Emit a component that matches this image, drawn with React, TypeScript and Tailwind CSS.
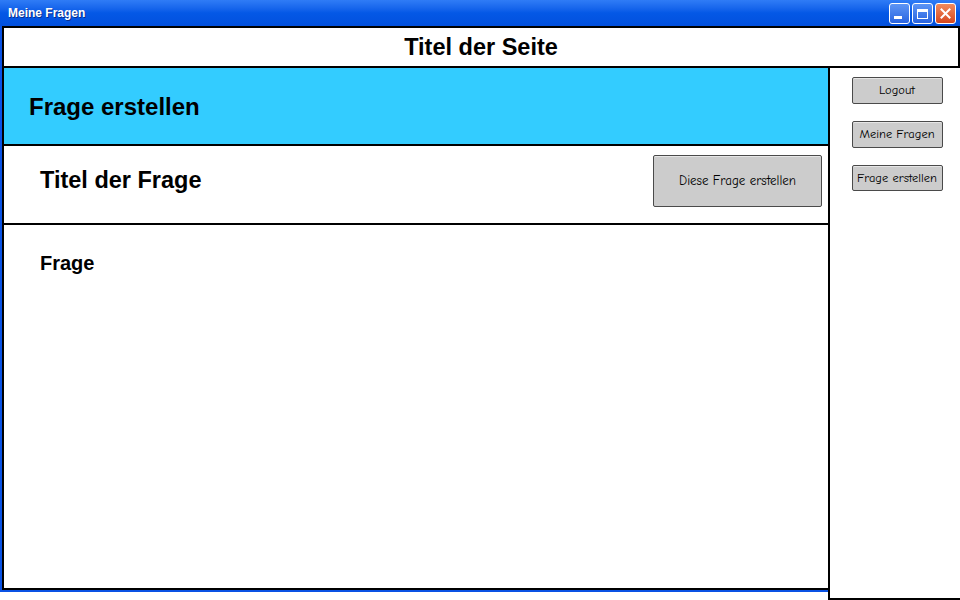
import { ReactNode } from 'react';

const sketchFont = { fontFamily: '"Comic Sans MS", "Comic Neue", "Liberation Sans", sans-serif' };

function SketchButton({ children, className = '' }: { children: ReactNode; className?: string }) {
  return (
    <div
      className={`flex items-center justify-center bg-[#cccccc] border border-[#4a4a4a] rounded-[2px] text-black shadow-[inset_0_1px_0_#e6e6e6] ${className}`}
      style={sketchFont}
    >
      {children}
    </div>
  );
}

function WinButton({ children, close = false }: { children: ReactNode; close?: boolean }) {
  return (
    <div
      className={`w-[21px] h-[21px] rounded-[3px] border border-white flex items-center justify-center ${
        close ? 'bg-gradient-to-b from-[#f08a5d] to-[#d6461c]' : 'bg-gradient-to-b from-[#5d95f5] to-[#2a64e0]'
      }`}
    >
      {children}
    </div>
  );
}

export default function App() {
  return (
    <div className="w-[960px] h-[600px] bg-white flex flex-col overflow-hidden" style={{ fontFamily: '"Liberation Sans", Arial, sans-serif' }}>
      {/* Title bar */}
      <div className="h-[26px] flex items-center justify-between pl-[8px] pr-[4px] bg-gradient-to-b from-[#2f7cf6] via-[#0458e6] to-[#0250dd]">
        <span className="text-white text-[12px] font-bold [text-shadow:1px_1px_0_#0a2d8a]">Meine Fragen</span>
        <div className="flex gap-[2px] pt-[1px]">
          <WinButton>
            <div className="w-[8px] h-[3px] bg-white mt-[8px] -ml-[4px]" />
          </WinButton>
          <WinButton>
            <div className="w-[11px] h-[10px] border border-white border-t-[3px]" />
          </WinButton>
          <WinButton close>
            <svg width="11" height="11" viewBox="0 0 11 11">
              <path d="M1.5 1.5 L9.5 9.5 M9.5 1.5 L1.5 9.5" stroke="white" strokeWidth="2" strokeLinecap="square" />
            </svg>
          </WinButton>
        </div>
      </div>

      {/* Page header */}
      <div className="flex">
        <div className="w-[2px] bg-[#0a52e4]" />
        <div className="flex-1 h-[42px] border-2 border-black flex items-center justify-center pt-[2px]">
          <h1 className="text-[23.5px] font-bold text-black">Titel der Seite</h1>
        </div>
      </div>

      <div className="flex flex-1 min-h-0">
        {/* Main column inside window frame */}
        <div className="w-[828px] h-[524px] flex flex-col border-l-2 border-b-2 border-[#0a52e4]">
          <div className="flex-1 flex flex-col border-l-2 border-b-2 border-black">
            <div className="h-[78px] bg-[#33ccff] border-b-2 border-black flex items-center pl-[25px] pt-[2px]">
              <h2 className="text-[24px] font-bold text-black">Frage erstellen</h2>
            </div>
            <div className="h-[79px] border-b-2 border-black flex items-center justify-between pl-[36px] pr-[6px] pb-[8px]">
              <h3 className="text-[23.5px] font-bold text-black">Titel der Frage</h3>
              <SketchButton className="w-[169px] h-[52px] text-[13px]">Diese Frage erstellen</SketchButton>
            </div>
            <div className="flex-1 pl-[36px] pt-[24px]">
              <p className="text-[20px] leading-[28px] font-bold text-black">Frage</p>
            </div>
          </div>
        </div>

        {/* Sidebar */}
        <aside className="flex-1 h-[532px] border-l-2 border-b-2 border-black flex flex-col items-center pt-[9px] gap-[17px] pl-[4px]">
          <SketchButton className="w-[91px] h-[27px] text-[12.5px]">Logout</SketchButton>
          <SketchButton className="w-[91px] h-[27px] text-[12.5px]">Meine Fragen</SketchButton>
          <SketchButton className="w-[91px] h-[26px] text-[12.5px] whitespace-nowrap">Frage erstellen</SketchButton>
        </aside>
      </div>
    </div>
  );
}
